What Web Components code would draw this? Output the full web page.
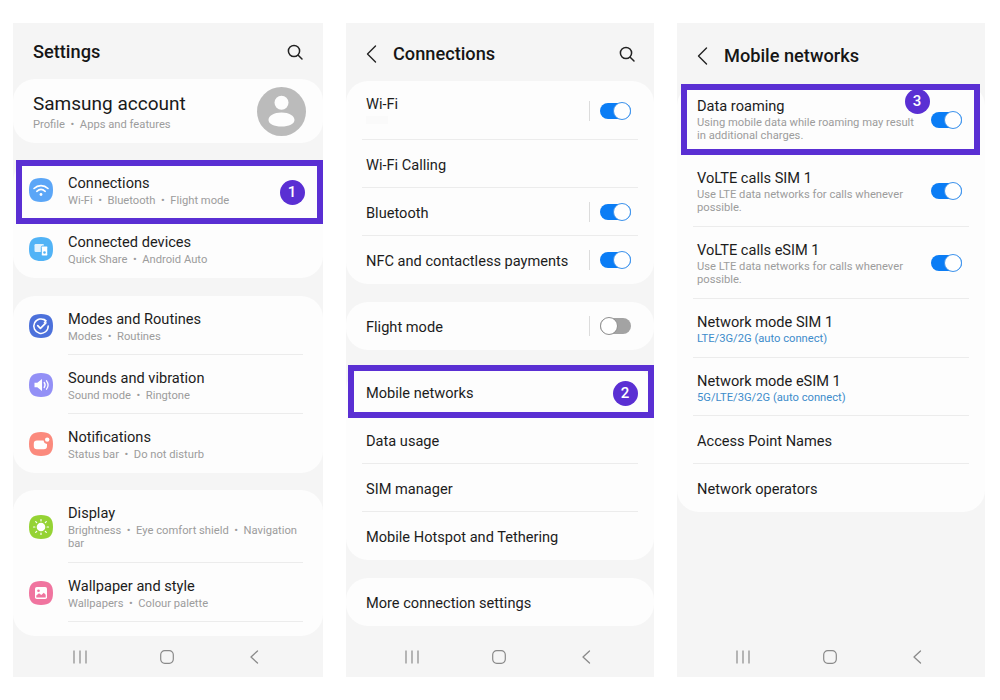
<!DOCTYPE html>
<html>
<head>
<meta charset="utf-8">
<title>Settings</title>
<style>
  html, body { margin: 0; background: #fff; }
  body { font-family: Roboto, "Liberation Sans", sans-serif; color: #1c1c1c; }
  .page { display: flex; gap: 23px; padding: 23px 0 0 13px; }
  .blue { color: #3d8ccb; }
  .smudge { display: inline-block; width: 22px; height: 8px; background: #fafafa; }
</style>
</head>
<body>
<div class="page">
  <phone-screen style="width:310px">
    <top-bar heading="Settings" search left="20" right="19" style="height:56px;padding-top:1px"></top-bar>
    <set-card>
      <account-row></account-row>
    </set-card>
    <set-card gap>
      <set-row h="59" icon-row>
        <step-frame slot="mark" n="1" style="inset:0 0 -5px 3px;--bx:257.5px;--by:13.5px"></step-frame>
        <set-icon slot="icon" name="wifi" color="#5ba6f7"></set-icon>
        Connections
        <span slot="sub">Wi-Fi &nbsp;•&nbsp; Bluetooth &nbsp;•&nbsp; Flight mode</span>
      </set-row>
      <set-row h="59" icon-row>
        <set-icon slot="icon" name="devices" color="#51b3f6"></set-icon>
        Connected devices
        <span slot="sub">Quick Share &nbsp;•&nbsp; Android Auto</span>
      </set-row>
    </set-card>
    <set-card style="margin-top:18px">
      <set-row h="59" icon-row line>
        <set-icon slot="icon" name="modes" color="#4c71db"></set-icon>
        Modes and Routines
        <span slot="sub">Modes &nbsp;•&nbsp; Routines</span>
      </set-row>
      <set-row h="59" icon-row line>
        <set-icon slot="icon" name="sound" color="#9390f6"></set-icon>
        Sounds and vibration
        <span slot="sub">Sound mode &nbsp;•&nbsp; Ringtone</span>
      </set-row>
      <set-row h="59" icon-row>
        <set-icon slot="icon" name="bell" color="#fb8a7d"></set-icon>
        Notifications
        <span slot="sub">Status bar &nbsp;•&nbsp; Do not disturb</span>
      </set-row>
    </set-card>
    <set-card gap pad-bottom>
      <set-row h="73" icon-row line start>
        <set-icon slot="icon" name="sun" color="#95d334"></set-icon>
        Display
        <span slot="sub">Brightness &nbsp;•&nbsp; Eye comfort shield &nbsp;•&nbsp; Navigation bar</span>
      </set-row>
      <set-row h="59" icon-row line>
        <set-icon slot="icon" name="picture" color="#f0749f"></set-icon>
        Wallpaper and style
        <span slot="sub">Wallpapers &nbsp;•&nbsp; Colour palette</span>
      </set-row>
    </set-card>
    <nav-bar></nav-bar>
  </phone-screen>

  <phone-screen style="width:308px">
    <top-bar heading="Connections" back search left="20" right="18" style="height:58px;padding-top:4px"></top-bar>
    <set-card>
      <set-row h="59" flat line>
        Wi-Fi
        <span slot="sub"><span class="smudge"></span></span>
        <toggle-switch slot="end" on sep></toggle-switch>
      </set-row>
      <set-row h="48" flat line>Wi-Fi Calling</set-row>
      <set-row h="48" flat line>
        Bluetooth
        <toggle-switch slot="end" on sep></toggle-switch>
      </set-row>
      <set-row h="48" flat>
        NFC and contactless payments
        <toggle-switch slot="end" on sep></toggle-switch>
      </set-row>
    </set-card>
    <set-card style="margin-top:18px">
      <set-row h="48" flat>
        Flight mode
        <toggle-switch slot="end" sep></toggle-switch>
      </set-row>
    </set-card>
    <set-card style="margin-top:18px">
      <set-row h="48" flat>
        <step-frame slot="mark" n="2" style="inset:-3px 0 -2px 2px;--bx:258.5px;--by:9.5px"></step-frame>
        Mobile networks
      </set-row>
      <set-row h="48" flat line>Data usage</set-row>
      <set-row h="48" flat line>SIM manager</set-row>
      <set-row h="48" flat>Mobile Hotspot and Tethering</set-row>
    </set-card>
    <set-card style="margin-top:18px">
      <set-row h="48" flat>More connection settings</set-row>
    </set-card>
    <nav-bar style="padding-left:22px"></nav-bar>
  </phone-screen>

  <phone-screen style="width:308px">
    <top-bar heading="Mobile networks" back left="20" right="19" style="height:61px;padding-top:5px"></top-bar>
    <set-card>
      <set-row h="71" flat start pad="13">
        <step-frame slot="mark" n="3" style="inset:0 5px 0 4px;--bx:217.5px;--by:-1.5px"></step-frame>
        Data roaming
        <span slot="sub">Using mobile data while roaming may result in additional charges.</span>
        <toggle-switch slot="end" on></toggle-switch>
      </set-row>
      <set-row h="72" flat line start pad="14">
        VoLTE calls SIM 1
        <span slot="sub">Use LTE data networks for calls whenever possible.</span>
        <toggle-switch slot="end" on></toggle-switch>
      </set-row>
      <set-row h="72" flat line start pad="14">
        VoLTE calls eSIM 1
        <span slot="sub">Use LTE data networks for calls whenever possible.</span>
        <toggle-switch slot="end" on></toggle-switch>
      </set-row>
      <set-row h="59" flat line>
        Network mode SIM 1
        <span slot="sub" class="blue">LTE/3G/2G (auto connect)</span>
      </set-row>
      <set-row h="58" flat line>
        Network mode eSIM 1
        <span slot="sub" class="blue">5G/LTE/3G/2G (auto connect)</span>
      </set-row>
      <set-row h="48" flat line>Access Point Names</set-row>
      <set-row h="48" flat>Network operators</set-row>
    </set-card>
    <nav-bar style="padding-left:22px"></nav-bar>
  </phone-screen>
</div>

<script>
class PhoneScreen extends HTMLElement {
  constructor() {
    super();
    this.attachShadow({ mode: "open" }).innerHTML = `
      <style>
        :host { display: flex; flex-direction: column; height: 654px; background: #f5f5f5; flex: none; }
      </style>
      <slot></slot>`;
  }
}

const SEARCH = `<svg width="18" height="18" viewBox="0 0 18 18" fill="none" stroke="#222" stroke-width="1.5" stroke-linecap="round"><circle cx="8" cy="8" r="5.6"/><path d="M12.2 12.2 16 16"/></svg>`;
const CHEVRON = `<svg width="11" height="18" viewBox="0 0 11 18" fill="none" stroke="#222" stroke-width="1.4" stroke-linecap="round" stroke-linejoin="round"><path d="M9.5 1 1.5 9l8 8"/></svg>`;

class TopBar extends HTMLElement {
  connectedCallback() {
    const back = this.hasAttribute("back") ? `<span class="back">${CHEVRON}</span>` : "";
    const search = this.hasAttribute("search") ? `<span class="search">${SEARCH}</span>` : "";
    this.attachShadow({ mode: "open" }).innerHTML = `
      <style>
        :host { display: flex; align-items: center; flex: none; box-sizing: border-box;
                padding: 0 ${this.getAttribute("right")}px 0 ${this.getAttribute("left")}px; }
        .inner { display: flex; align-items: center; width: 100%; height: 24px; }
        .back { display: flex; margin-right: 16px; }
        h1 { margin: 0; font: 500 18.2px/24px Roboto, "Liberation Sans", sans-serif; color: #161616; flex: 1; }
        .search { display: flex; }
      </style>
      <div class="inner">${back}<h1>${this.getAttribute("heading")}</h1>${search}</div>`;
  }
}

class SetCard extends HTMLElement {
  constructor() {
    super();
    this.attachShadow({ mode: "open" }).innerHTML = `
      <style>
        :host { display: block; flex: none; background: #fdfdfd; border-radius: 22px; }
        :host([gap]) { margin-top: 17px; }
        :host([pad-bottom]) { padding-bottom: 14px; }
      </style>
      <slot></slot>`;
  }
}

class AccountRow extends HTMLElement {
  constructor() {
    super();
    this.attachShadow({ mode: "open" }).innerHTML = `
      <style>
        :host { display: flex; align-items: center; height: 64px; padding: 0 17px 0 20px; }
        .txt { flex: 1; padding-top: 2px; }
        .name { font-size: 19px; line-height: 24px; color: #1a1a1a; }
        .sub { font-size: 11.2px; line-height: 14px; color: #9c9c9c; margin-top: 2px; }
        svg { display: block; }
      </style>
      <div class="txt">
        <div class="name">Samsung account</div>
        <div class="sub">Profile &nbsp;•&nbsp; Apps and features</div>
      </div>
      <svg width="49" height="49" viewBox="0 0 49 49">
        <circle cx="24.5" cy="24.5" r="24.5" fill="#bbb"/>
        <circle cx="24.5" cy="15.8" r="7" fill="#fdfdfd"/>
        <path d="M24.5 25.5c7.6 0 13 3.4 13 7.4 0 3.800-5.600 6.600-13 6.600s-13-2.800-13-6.600c0-4 5.400-7.400 13-7.400z" fill="#fdfdfd"/>
      </svg>`;
  }
}

class SetRow extends HTMLElement {
  connectedCallback() {
    const hasSub = !!this.querySelector('[slot="sub"]');
    const start = this.hasAttribute("start");
    const iconRow = this.hasAttribute("icon-row");
    // top padding nudges the text only, icon and switch stay centred on the row
    let top = this.getAttribute("pad");
    if (top === null) top = start ? 14 : iconRow ? 2 : hasSub ? 1 : 2;
    this.attachShadow({ mode: "open" }).innerHTML = `
      <style>
        :host { display: flex; position: relative; box-sizing: border-box; height: ${this.getAttribute("h")}px;
                align-items: ${start ? "flex-start" : "center"}; font-size: 14.6px; line-height: 18px; color: #1c1c1c;
                padding: ${top}px ${iconRow ? 20 : 23}px 0 ${iconRow ? 16 : 20}px; }
        :host([line])::after { content: ""; position: absolute; bottom: 0; height: 1px; background: #ececec;
                left: ${iconRow ? "55px" : "16px"}; right: ${iconRow ? "20px" : "16px"}; }
        .icon { display: ${iconRow ? "flex" : "none"}; flex: none; width: 39px; align-self: center; margin-top: -${top}px; }
        .txt { flex: 1; min-width: 0; }
        .sub { display: ${hasSub ? "block" : "none"}; margin-top: ${iconRow ? 2 : 1}px; font-size: 11.2px; line-height: 13px; color: #9c9c9c; }
        .end { display: flex; align-items: center; flex: none; align-self: center; margin-top: -${top}px; }
        ::slotted([slot="end"]) { margin-left: 14px; }
      </style>
      <div class="icon"><slot name="icon"></slot></div>
      <div class="txt"><div><slot></slot></div><div class="sub"><slot name="sub"></slot></div></div>
      <div class="end"><slot name="end"></slot></div>
      <slot name="mark"></slot>`;
  }
}

const ICONS = {
  wifi: `<g fill="none" stroke="#fff" stroke-width="1.6" stroke-linecap="round"><path d="M5 10.500c4-3.800 10-3.800 14 0"/><path d="M7.800 13.300c2.500-2.200 5.900-2.200 8.400 0"/></g><circle cx="12" cy="16.500" r="1.400" fill="#fff"/>`,
  devices: `<rect x="5.500" y="7" width="9.500" height="8" rx="1.200" fill="#dff1fd"/><rect x="12.300" y="9" width="6.500" height="10" rx="1.400" fill="#fff" stroke="#51b3f6" stroke-width="1"/><circle cx="15.500" cy="15.500" r="1.300" fill="#51b3f6"/>`,
  modes: `<path d="M16.800 6.800A7.200 7.200 0 1 0 19.200 12" fill="none" stroke="#fff" stroke-width="1.500" stroke-linecap="round"/><path d="M15 5.300l2 1.500-1.700 1.900" fill="none" stroke="#fff" stroke-width="1.300" stroke-linecap="round" stroke-linejoin="round"/><path d="M8.700 11.700l2.700 2.700 5.500-5.500" fill="none" stroke="#fff" stroke-width="1.700" stroke-linecap="round" stroke-linejoin="round"/>`,
  sound: `<path d="M5.500 9.700h2.800l4.700-3.700v12l-4.700-3.700H5.500z" fill="#fff"/><path d="M15.200 9.500c1.100 1.500 1.100 3.500 0 5M17.500 7.800c1.900 2.500 1.900 5.900 0 8.400" fill="none" stroke="#fff" stroke-width="1.300" stroke-linecap="round"/>`,
  bell: `<path d="M8 8.500h6.600a3.800 3.800 0 0 0 3.400 3.400V14a3.200 3.200 0 0 1-3.200 3.200H8A3.200 3.200 0 0 1 4.800 14v-2.300A3.200 3.200 0 0 1 8 8.500z" fill="#fff"/><circle cx="18.200" cy="7.600" r="2.200" fill="#fff"/>`,
  sun: `<circle cx="12" cy="12" r="4.300" fill="#fff"/><g stroke="#fff" stroke-width="1.200" stroke-linecap="round"><path d="M12 4.500v1.400M12 18.100v1.400M4.500 12h1.400M18.100 12h1.400M6.700 6.700l1 1M16.300 16.300l1 1M6.700 17.300l1-1M16.300 7.700l1-1"/></g>`,
  picture: `<rect x="6" y="6" width="12" height="12" rx="1.800" fill="#fff"/><circle cx="9.500" cy="9.700" r="1.300" fill="#f0749f"/><path d="M7.300 16.500v-2l2.700-2.300 2.300 1.800 2.500-2.300 1.900 2v2.800z" fill="#f0749f"/>`
};

class SetIcon extends HTMLElement {
  connectedCallback() {
    this.attachShadow({ mode: "open" }).innerHTML = `
      <style>:host { display: block; width: 24px; height: 24px; } svg { display: block; }</style>
      <svg width="24" height="24" viewBox="0 0 24 24">
        <path d="M12 0c8.500 0 12 3.500 12 12s-3.500 12-12 12S0 20.500 0 12 3.500 0 12 0z" fill="${this.getAttribute("color")}"/>
        ${ICONS[this.getAttribute("name")]}
      </svg>`;
  }
}

class ToggleSwitch extends HTMLElement {
  constructor() {
    super();
    this.attachShadow({ mode: "open" }).innerHTML = `
      <style>
        :host { display: flex; align-items: center; flex: none; }
        .sep { display: none; width: 1px; height: 20px; background: #dcdcdc; margin-right: 10px; }
        :host([sep]) .sep { display: block; }
        .track { position: relative; width: 31px; height: 16px; border-radius: 8px; background: #a3a3a3; }
        .thumb { position: absolute; top: -1px; left: 0; box-sizing: border-box; width: 18px; height: 18px; border-radius: 50%;
                 background: #fff; border: 1px solid #8f8f8f; }
        :host([on]) .track { background: #0b7df5; }
        :host([on]) .thumb { left: 13px; border-color: #3e93ec; }
      </style>
      <span class="sep"></span>
      <span class="track"><span class="thumb"></span></span>`;
  }
}

class StepFrame extends HTMLElement {
  connectedCallback() {
    this.attachShadow({ mode: "open" }).innerHTML = `
      <style>
        :host { position: absolute; box-sizing: border-box; border: 6px solid #5a2fd3; pointer-events: none; }
        .badge { position: absolute; left: var(--bx); top: var(--by); width: 25px; height: 25px; border-radius: 50%;
                 background: #5a2fd3; color: #fff; font: 500 15px/25px Roboto, "Liberation Sans", sans-serif; text-align: center; }
      </style>
      <span class="badge">${this.getAttribute("n")}</span>`;
  }
}

class NavBar extends HTMLElement {
  constructor() {
    super();
    this.attachShadow({ mode: "open" }).innerHTML = `
      <style>
        :host { display: grid; grid-template-columns: repeat(3, 87px); justify-items: center; align-items: center;
                height: 40px; margin-top: auto; padding-left: 23px; flex: none; }
        svg { display: block; }
      </style>
      <svg width="14" height="14" viewBox="0 0 14 14" stroke="#8a8a8a" stroke-width="1.200" fill="none"><path d="M1 .5v13M7 .5v13M13 .5v13"/></svg>
      <svg width="14" height="14" viewBox="0 0 14 14" stroke="#8a8a8a" stroke-width="1.200" fill="none"><rect x=".7" y=".7" width="12.600" height="12.600" rx="4"/></svg>
      <svg width="10" height="14" viewBox="0 0 10 14" stroke="#8a8a8a" stroke-width="1.300" fill="none" stroke-linecap="round" stroke-linejoin="round"><path d="M8.500 1 2 7l6.500 6"/></svg>`;
  }
}

customElements.define("phone-screen", PhoneScreen);
customElements.define("top-bar", TopBar);
customElements.define("set-card", SetCard);
customElements.define("account-row", AccountRow);
customElements.define("set-row", SetRow);
customElements.define("set-icon", SetIcon);
customElements.define("toggle-switch", ToggleSwitch);
customElements.define("step-frame", StepFrame);
customElements.define("nav-bar", NavBar);
</script>
</body>
</html>
